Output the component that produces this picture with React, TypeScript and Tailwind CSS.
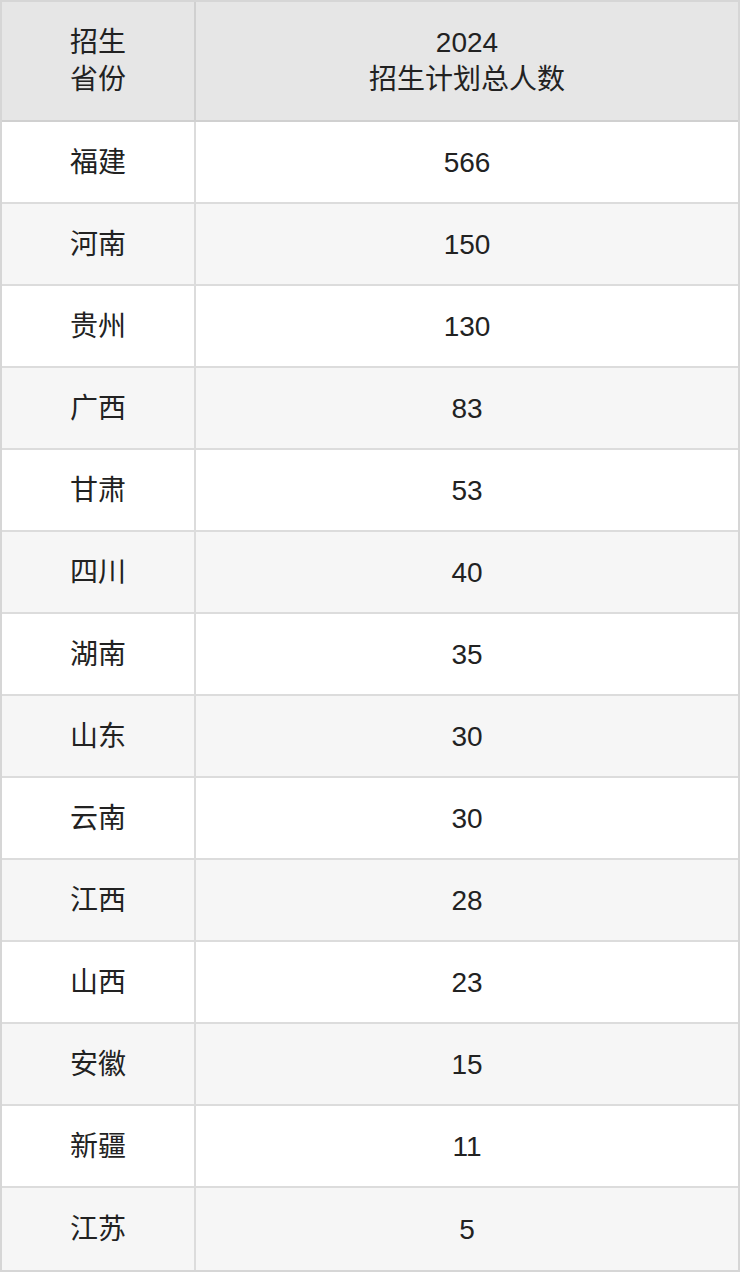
import React from "react";

const rows: [string, string][] = [
  ["福建", "566"],
  ["河南", "150"],
  ["贵州", "130"],
  ["广西", "83"],
  ["甘肃", "53"],
  ["四川", "40"],
  ["湖南", "35"],
  ["山东", "30"],
  ["云南", "30"],
  ["江西", "28"],
  ["山西", "23"],
  ["安徽", "15"],
  ["新疆", "11"],
  ["江苏", "5"],
];

export default function App() {
  return (
    <div
      className="w-[740px] bg-white text-[#222222] text-[28px] leading-[37px]"
      style={{ fontFamily: '"Liberation Sans", "Noto Sans CJK SC", sans-serif' }}
    >
      <div className="border-2 border-[#d6d6d6]">
        <div className="flex h-[120px] bg-[#e6e6e6] border-b-2 border-[#d0d0d0]">
          <div className="w-[192px] flex flex-col items-center justify-center text-center">
            <span>招生</span>
            <span>省份</span>
          </div>
          <div className="flex-1 border-l-2 border-[#d0d0d0] flex flex-col items-center justify-center text-center">
            <span>2024</span>
            <span>招生计划总人数</span>
          </div>
        </div>
        {rows.map(([p, n], i) => (
          <div
            key={p}
            className={
              "flex h-[82px] border-[#dcdcdc] " +
              (i < rows.length - 1 ? "border-b-2 " : "h-[80px] ") +
              (i % 2 === 0 ? "bg-white" : "bg-[#f6f6f6]")
            }
          >
            <div className="w-[192px] flex items-center justify-center">{p}</div>
            <div className="flex-1 border-l-2 border-[#dcdcdc] flex items-center justify-center">{n}</div>
          </div>
        ))}
      </div>
    </div>
  );
}
